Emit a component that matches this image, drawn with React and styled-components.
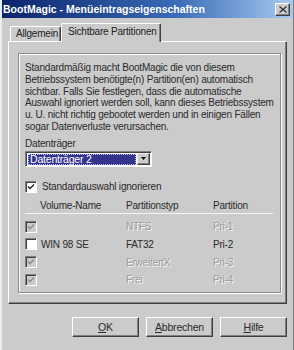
import React from 'react';
import styled, { createGlobalStyle } from 'styled-components';

const Global = createGlobalStyle`
  html, body { margin: 0; padding: 0; background: #cbcbcb; }
  body {
    font-family: "Liberation Sans", Arial, sans-serif;
    font-size: 10px;
    letter-spacing: -0.2px;
    color: #000;
  }
`;

const Window = styled.div`
  width: 294px;
  height: 350px;
  box-sizing: border-box;
  background: #cbcbcb;
  border-left: 2px solid #ececec;
  border-right: 1px solid #7a7a7a;
  display: flex;
  flex-direction: column;
  overflow: hidden;
`;

const TitleBar = styled.div`
  height: 18px;
  flex: none;
  display: flex;
  align-items: center;
  justify-content: space-between;
  padding: 0 3px 0 1px;
  background: linear-gradient(to right, #0a246a 0%, #3b6cb8 60%, #a6caf0 100%);
  color: #fff;
  font-weight: bold;
  font-size: 10.5px;
  letter-spacing: 0;
`;

const CloseButton = styled.div`
  width: 15px;
  height: 13px;
  box-sizing: border-box;
  background: #cbcbcb;
  border: 1px solid;
  border-color: #fff #404040 #404040 #fff;
  box-shadow: inset -1px -1px #808080;
  display: flex;
  align-items: center;
  justify-content: center;
`;

const Body = styled.div`
  flex: 1;
  display: flex;
  flex-direction: column;
  padding: 6px 6px 0 6px;
`;

const TabRow = styled.div`
  display: flex;
  align-items: flex-end;
  padding-left: 2px;
  height: 18px;
  position: relative;
  z-index: 1;
  margin-bottom: -1px;
`;

const Tab = styled.div`
  box-sizing: border-box;
  height: ${p => (p.$active ? '19px' : '15px')};
  width: ${p => p.$w}px;
  padding: ${p => (p.$active ? '2px 0 0 6px' : '1px 0 0 5px')};
  background: #cbcbcb;
  border-top: 1px solid #fff;
  border-left: 1px solid #fff;
  border-right: 1px solid #404040;
  box-shadow: inset -1px 0 #808080;
  border-radius: 2px 2px 0 0;
  color: #222;
  white-space: nowrap;
  margin-bottom: ${p => (p.$active ? '0' : '1px')};
`;

const Panel = styled.div`
  height: 263px;
  box-sizing: border-box;
  border-top: 1px solid #fff;
  border-left: 1px solid #fff;
  border-right: 1px solid #404040;
  border-bottom: 1px solid #404040;
  box-shadow: inset -1px -1px #808080;
  padding: 11px 11px 10px 9px;
  display: flex;
`;

const GroupBox = styled.div`
  flex: 1;
  box-sizing: border-box;
  border: 1px solid #8a8a8a;
  box-shadow: inset 1px 1px #fff, 1px 1px #fff;
  padding: 8px 6px 0 6px;
  display: flex;
  flex-direction: column;
`;

const Paragraph = styled.div`
  line-height: 11.8px;
  color: #2a2a2a;
  white-space: nowrap;
`;

const Line = styled.span`
  display: block;
`;

const Label = styled.div`
  margin-top: 5px;
  line-height: 12px;
  color: #2a2a2a;
`;

const Select = styled.div`
  margin-top: 1px;
  width: 127px;
  height: 16px;
  box-sizing: border-box;
  border: 1px solid;
  border-color: #808080 #fff #fff #808080;
  box-shadow: inset 1px 1px #404040;
  background: #fff;
  display: flex;
  padding: 2px 1px 1px 2px;
  gap: 1px;
`;

const Selected = styled.div`
  flex: 1;
  background: #34348c;
  color: #fff;
  outline: 1px dotted #c0c0ff;
  outline-offset: -1px;
  padding-left: 2px;
  line-height: 11px;
  font-size: 10.5px;
`;

const DropButton = styled.div`
  width: 13px;
  box-sizing: border-box;
  margin-top: -1px;
  margin-bottom: 0;
  background: #cbcbcb;
  border: 1px solid;
  border-color: #eee #404040 #404040 #eee;
  box-shadow: inset -1px -1px #808080;
  display: flex;
  align-items: center;
  justify-content: center;
`;

const CheckRow = styled.div`
  margin-top: 14px;
  display: flex;
  align-items: center;
  gap: 5px;
  height: 12px;
  color: #2a2a2a;
`;

const Box = styled.div`
  width: 12px;
  height: 12px;
  flex: none;
  box-sizing: border-box;
  border: 1px solid;
  border-color: #808080 #fff #fff #808080;
  box-shadow: inset 1px 1px #404040;
  background: ${p => (p.$disabled ? '#cbcbcb' : '#fff')};
  display: flex;
  align-items: center;
  justify-content: center;
`;

const Table = styled.div`
  margin-top: 7px;
  margin-right: 0;
`;

const Grid = styled.div`
  display: grid;
  grid-template-columns: 16px 85px 87px 1fr;
  align-items: center;
`;

const HeaderRow = styled(Grid)`
  height: 12px;
  padding-bottom: 1px;
  border-bottom: 1px solid #f4f4f4;
  box-shadow: 0 -0px #888;
  color: #333;
  margin-right: 1px;
`;

const Row = styled(Grid)`
  height: 17.7px;
  &:first-of-type { margin-top: 4px; }
`;

const Cell = styled.div`
  white-space: nowrap;
  color: ${p => (p.$disabled ? '#9c9c9c' : '#2a2a2a')};
  text-shadow: ${p => (p.$disabled ? '1px 1px 0 #f6f6f6' : 'none')};
  margin-left: ${p => p.$shift || 0}px;
`;

const Rows = styled.div`
  padding-top: 4px;
  display: flex;
  flex-direction: column;
`;

const ButtonRow = styled.div`
  margin-top: 13px;
  display: flex;
  justify-content: flex-end;
  gap: 7px;
`;

const Button = styled.div`
  width: 67px;
  height: 20px;
  box-sizing: border-box;
  border: 1px solid;
  border-color: #fff #404040 #404040 #fff;
  box-shadow: inset -1px -1px #808080;
  display: flex;
  align-items: center;
  justify-content: center;
  color: #2a2a2a;
  font-size: 10.5px;
`;

const Check = ({ color }) => (
  <svg width="8" height="8" viewBox="0 0 8 8">
    <path d="M1 3.5 L3 5.5 L7 1.5" stroke={color} strokeWidth="1.4" fill="none" />
  </svg>
);

const rows = [
  { checked: true, disabled: true, name: '', type: 'NTFS', part: 'Pri-1' },
  { checked: false, disabled: false, name: 'WIN 98 SE', type: 'FAT32', part: 'Pri-2' },
  { checked: true, disabled: true, name: '', type: 'ErweitertX', part: 'Pri-3' },
  { checked: true, disabled: true, name: '', type: 'Frei', part: 'Pri-4' },
];

export default function App() {
  return (
    <>
      <Global />
      <Window>
        <TitleBar>
          <span>BootMagic - Menüeintragseigenschaften</span>
          <CloseButton>
            <svg width="8" height="7" viewBox="0 0 8 7">
              <path d="M0.5 0.5 L7.5 6.5 M7.5 0.5 L0.5 6.5" stroke="#333" strokeWidth="1.3" />
            </svg>
          </CloseButton>
        </TitleBar>
        <Body>
          <TabRow>
            <Tab $w={51}>Allgemein</Tab>
            <Tab $active $w={100}>Sichtbare Partitionen</Tab>
          </TabRow>
          <Panel>
            <GroupBox>
              <Paragraph>
                <Line>Standardmäßig macht BootMagic die von diesem</Line>
                <Line>Betriebssystem benötigte(n) Partition(en) automatisch</Line>
                <Line>sichtbar. Falls Sie festlegen, dass die automatische</Line>
                <Line>Auswahl ignoriert werden soll, kann dieses Betriebssystem</Line>
                <Line>u. U. nicht richtig gebootet werden und in einigen Fällen</Line>
                <Line>sogar Datenverluste verursachen.</Line>
              </Paragraph>
              <Label>Datenträger</Label>
              <Select>
                <Selected>Datenträger 2</Selected>
                <DropButton>
                  <svg width="5" height="3" viewBox="0 0 5 3">
                    <path d="M0 0 H5 L2.5 3 Z" fill="#000" />
                  </svg>
                </DropButton>
              </Select>
              <CheckRow>
                <Box><Check color="#222" /></Box>
                <span>Standardauswahl ignorieren</span>
              </CheckRow>
              <Table>
                <HeaderRow>
                  <span />
                  <Cell $shift={-1}>Volume-Name</Cell>
                  <Cell>Partitionstyp</Cell>
                  <Cell>Partition</Cell>
                </HeaderRow>
                <Rows>
                  {rows.map((r, i) => (
                    <Grid key={i} style={{ height: '17.7px' }}>
                      <Box $disabled={r.disabled}>
                        {r.checked && <Check color="#8a8a8a" />}
                      </Box>
                      <Cell>{r.name}</Cell>
                      <Cell $disabled={r.disabled}>{r.type}</Cell>
                      <Cell $disabled={r.disabled}>{r.part}</Cell>
                    </Grid>
                  ))}
                </Rows>
              </Table>
            </GroupBox>
          </Panel>
          <ButtonRow>
            <Button><span><u>O</u>K</span></Button>
            <Button><span><u>A</u>bbrechen</span></Button>
            <Button><span><u>H</u>ilfe</span></Button>
          </ButtonRow>
        </Body>
      </Window>
    </>
  );
}
